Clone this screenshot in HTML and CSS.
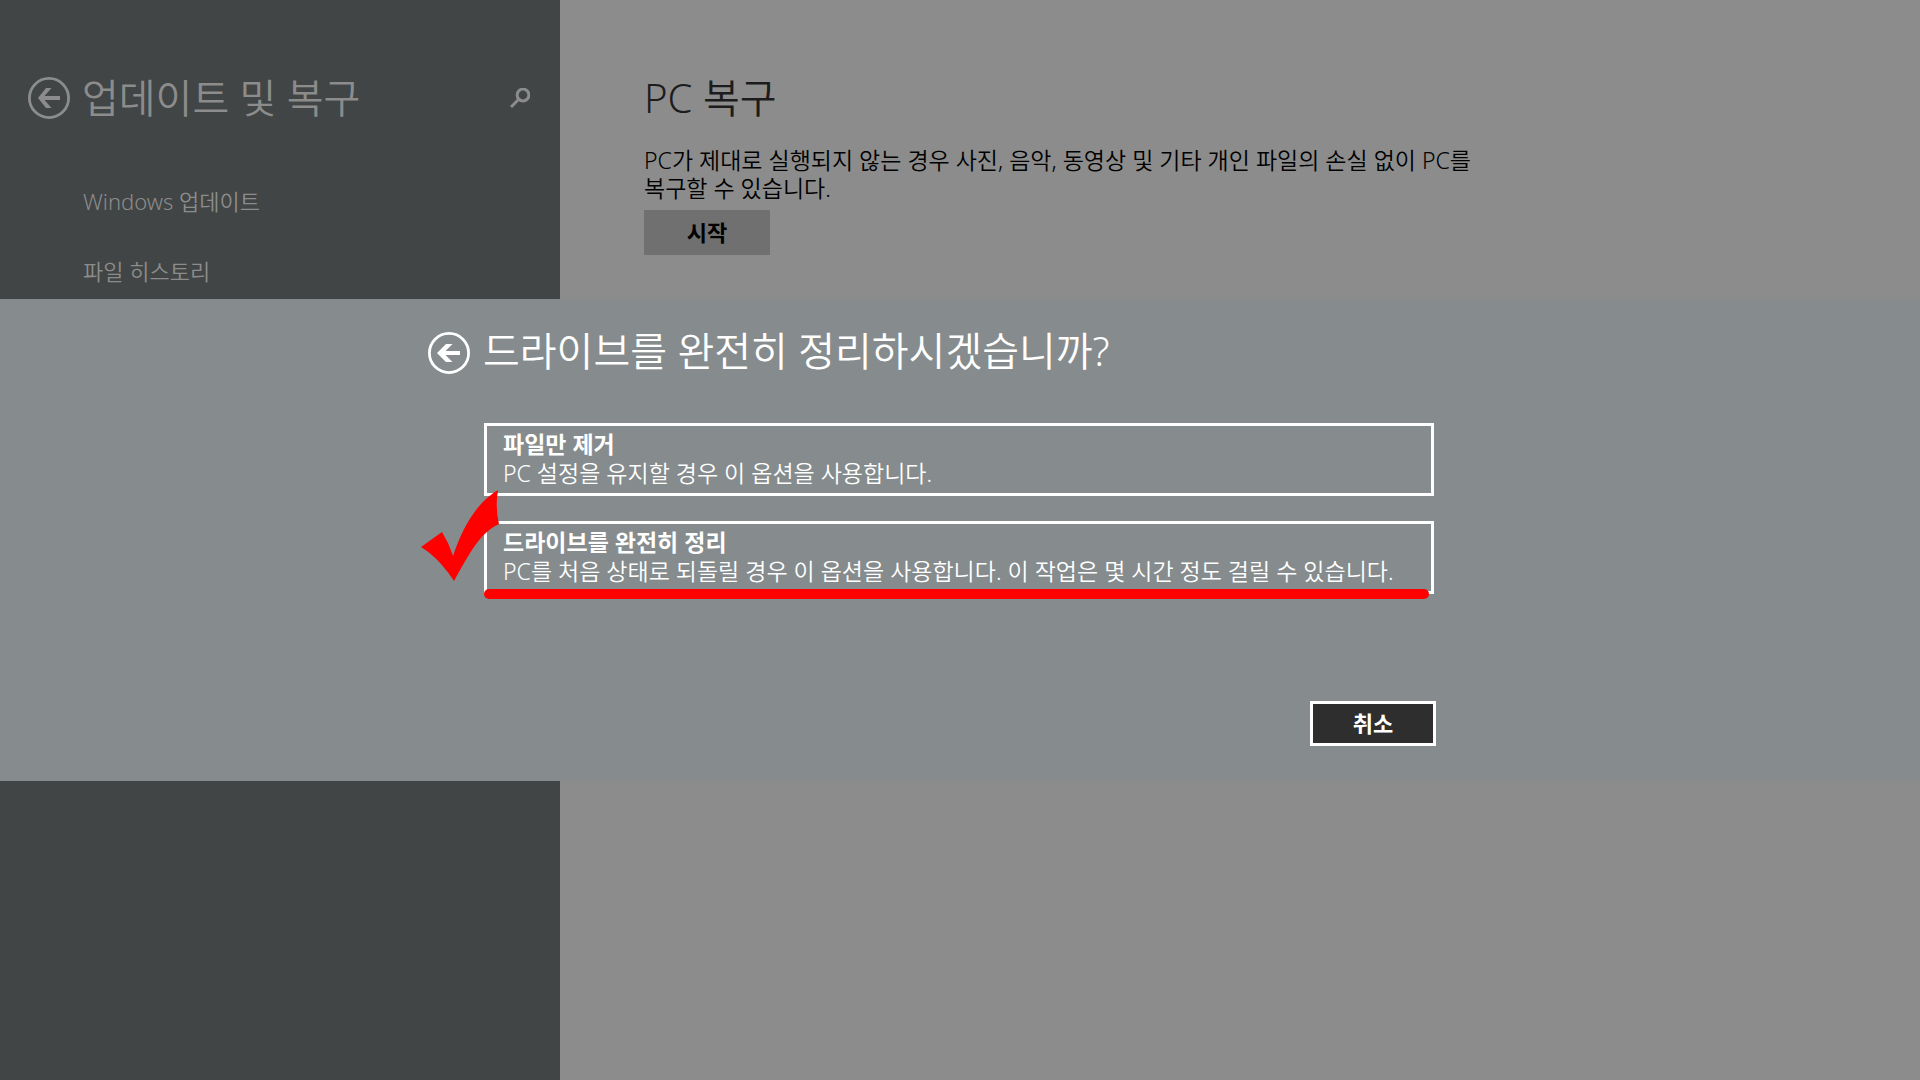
FILE: index.html
```html
<!DOCTYPE html>
<html lang="ko">
<head>
<meta charset="utf-8">
<meta name="viewport" content="width=device-width, initial-scale=1">
<title>업데이트 및 복구</title>
<link rel="stylesheet" href="styles.css">
</head>
<body>
<div class="app">
  <aside class="sidebar">
    <header class="sidebar-head">
      <button class="back" type="button" aria-label="뒤로">
        <svg viewBox="0 0 42 42" aria-hidden="true"><circle cx="21" cy="21" r="19.6"/><path d="M10 21 18 11h5.500l-7 8H32v4H16.500l7 8H18z"/></svg>
      </button>
      <h1 class="title">업데이트 및 복구</h1>
      <button class="search" type="button" aria-label="검색">
        <svg viewBox="0 0 20 20" aria-hidden="true"><circle cx="13" cy="7" r="5.9"/><path d="M8.500 11.500 1 19"/></svg>
      </button>
    </header>
    <nav class="menu">
      <a href="#update">Windows 업데이트</a>
      <a href="#history">파일 히스토리</a>
    </nav>
  </aside>
  <main class="content">
    <h2 class="title">PC 복구</h2>
    <p class="text">PC가 제대로 실행되지 않는 경우 사진, 음악, 동영상 및 기타 개인 파일의 손실 없이 PC를 복구할 수 있습니다.</p>
    <button class="button" type="button">시작</button>
  </main>
</div>

<section class="dialog" role="dialog" aria-modal="true" aria-labelledby="dialog-title">
  <div class="dialog-inner">
    <button class="back" type="button" aria-label="뒤로">
      <svg viewBox="0 0 42 42" aria-hidden="true"><circle cx="21" cy="21" r="19.6"/><path d="M9 21 18 12h6.500l-7 7H32v4H17.500l7 7H18z"/></svg>
    </button>
    <h2 class="title" id="dialog-title">드라이브를 완전히 정리하시겠습니까?</h2>
    <div class="options">
      <button class="option" type="button">
        <strong>파일만 제거</strong>
        <span>PC 설정을 유지할 경우 이 옵션을 사용합니다.</span>
      </button>
      <button class="option option-marked" type="button">
        <strong>드라이브를 완전히 정리</strong>
        <span>PC를 처음 상태로 되돌릴 경우 이 옵션을 사용합니다. 이 작업은 몇 시간 정도 걸릴 수 있습니다.</span>
        <svg class="check" viewBox="0 0 78 91" aria-hidden="true"><path d="M0 57 21 42Q28 53 32 66C43 34 57 12 77 0Q74 18 78 34C60 42 49 62 33 91Q18 68 0 57z"/></svg>
      </button>
    </div>
    <button class="button button-cancel" type="button">취소</button>
  </div>
</section>
</body>
</html>
```
FILE: styles.css
```css
* {
  box-sizing: border-box;
}

body {
  margin: 0;
  font-family: "Noto Sans", "Noto Sans CJK KR", sans-serif;
  font-size: 22px;
  line-height: 28px;
  font-weight: 350;
}

h1, h2, p {
  margin: 0;
}

button {
  padding: 0;
  border: 0;
  background: none;
  color: inherit;
  font: inherit;
}

svg {
  display: block;
}

.app {
  display: flex;
  min-height: 100vh;
}

.sidebar {
  flex: 0 0 560px;
  padding: 70px 30px 0 28px;
  background: #414545;
  color: #8c8c8c;
}

.sidebar-head {
  display: flex;
  align-items: center;
  gap: 12px;
}

.title {
  font-size: 40px;
  line-height: 56px;
  font-weight: 350;
}

.back {
  width: 42px;
  height: 42px;
}

.back circle {
  fill: none;
  stroke: currentColor;
  stroke-width: 2.8;
}

.back path {
  fill: currentColor;
}

.search {
  width: 20px;
  height: 20px;
  margin: 0 0 0 auto;
}

.search svg {
  fill: none;
  stroke: currentColor;
  stroke-width: 3;
}

.menu {
  display: flex;
  flex-direction: column;
  gap: 42px;
  padding: 61px 0 0 55px;
}

.menu a {
  color: inherit;
  text-decoration: none;
}

.content {
  flex: 1;
  padding: 70px 84px 0;
  background: #8c8c8c;
  color: #000;
}

.content .title {
  color: #1c1c1c;
}

.text {
  max-width: 830px;
  margin: 20px 0 8px;
  font-size: 23px;
}

.button {
  width: 126px;
  height: 45px;
  padding-bottom: 2px;
  background: #707070;
  font-weight: 700;
}

.dialog {
  position: fixed;
  top: 50%;
  left: 0;
  right: 0;
  transform: translateY(-50%);
  padding: 24px 0 35px;
  background: #868c8d;
  color: #fff;
}

.dialog-inner {
  display: grid;
  grid-template-columns: 55px minmax(0, 953px) 56px;
  justify-content: center;
  align-items: end;
}

.dialog .back {
  margin-bottom: 5px;
}

.options {
  grid-column: 2;
  display: grid;
  gap: 25px;
  margin: 44px 2px 107px 1px;
}

.option {
  position: relative;
  display: flex;
  flex-direction: column;
  gap: 1px;
  padding: 4px 16px 6px;
  border: 3px solid #fff;
  font-size: 23px;
  text-align: left;
}

.option strong {
  font-weight: 700;
}

.option-marked::after {
  content: "";
  position: absolute;
  left: -3px;
  right: 2px;
  bottom: -8px;
  height: 10px;
  border-radius: 5px;
  background: #f00;
}

.check {
  position: absolute;
  left: -66px;
  top: -34px;
  width: 78px;
  height: 91px;
  fill: #f00;
}

.button-cancel {
  grid-column: 2;
  justify-self: end;
  border: 3px solid #fff;
  background: #2e2e2e;
}
```
